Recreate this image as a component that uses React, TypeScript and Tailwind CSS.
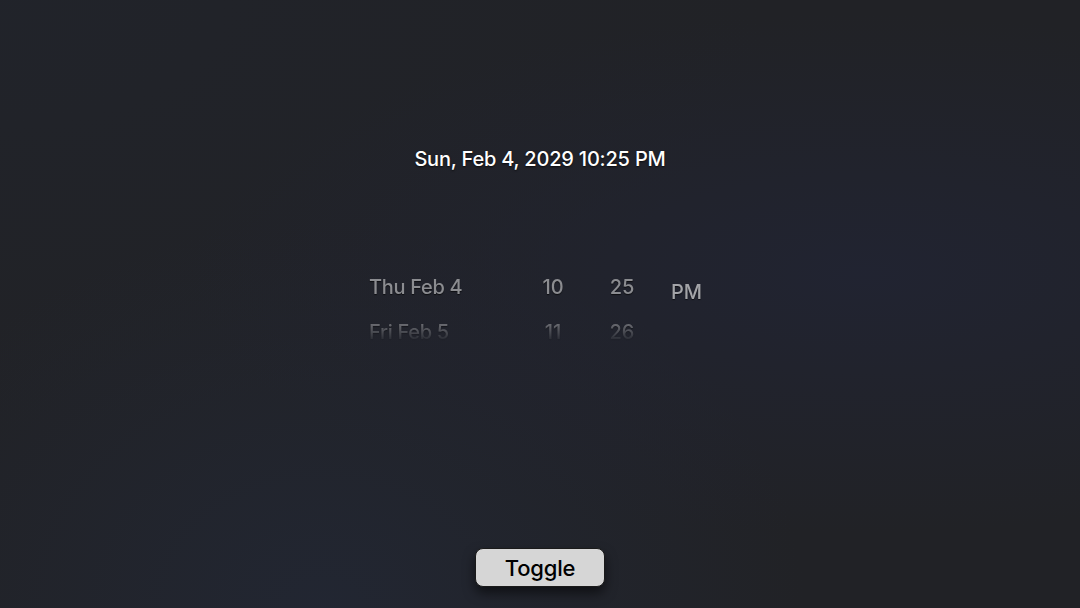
import React from "react";

export default function App() {
  return (
    <div
      className="relative w-[1080px] h-[608px] overflow-hidden flex flex-col items-center bg-[#212226]"
      style={{ fontFamily: "Inter, 'Noto Sans', sans-serif" }}
    >
      <div className="absolute inset-0 bg-[radial-gradient(ellipse_at_80%_45%,rgba(33,36,52,0.8)_0%,rgba(33,34,38,0)_55%),radial-gradient(ellipse_at_30%_100%,rgba(34,39,52,0.85)_0%,rgba(33,34,38,0)_45%),radial-gradient(ellipse_at_0%_0%,rgba(33,36,44,0.7)_0%,rgba(33,34,38,0)_50%)]" />
      <div className="relative flex flex-col items-center w-full h-full">
        <div className="mt-[146px] h-[26px] text-[20px] leading-[26px] font-medium tracking-[-0.2px] text-white [text-shadow:0_1px_2px_rgba(0,0,0,0.7)]">
          Sun, Feb 4, 2029 10:25 PM
        </div>

        <div className="mt-[98px] w-[342px] h-[72px] flex [mask-image:linear-gradient(to_bottom,black_0%,black_62%,rgba(0,0,0,0.6)_78%,transparent_100%)]">
          <div className="w-[150px] flex flex-col text-[20px] leading-[26px] font-medium tracking-[-0.3px] text-[#8b8c90] [text-shadow:0_1px_1px_rgba(0,0,0,0.6)]">
            <div className="pt-[4px] h-[45px] shrink-0">Thu Feb 4</div>
            <div className="pt-[4px] h-[45px] shrink-0">Fri Feb 5</div>
          </div>
          <div className="w-[68px] flex flex-col items-center text-[20px] leading-[26px] font-medium text-[#8b8c90] [text-shadow:0_1px_1px_rgba(0,0,0,0.6)]">
            <div className="pt-[4px] h-[45px] shrink-0">10</div>
            <div className="pt-[4px] h-[45px] shrink-0">11</div>
          </div>
          <div className="w-[70px] flex flex-col items-center text-[20px] leading-[26px] font-medium text-[#8b8c90] [text-shadow:0_1px_1px_rgba(0,0,0,0.6)]">
            <div className="pt-[4px] h-[45px] shrink-0">25</div>
            <div className="pt-[4px] h-[45px] shrink-0">26</div>
          </div>
          <div className="ml-[14px] pt-[9px] text-[20px] leading-[26px] font-medium text-[#a3a4a8] [text-shadow:0_1px_1px_rgba(0,0,0,0.6)]">
            PM
          </div>
        </div>

        <div className="mt-auto mb-[21px]">
          <button className="w-[130px] h-[39px] rounded-[8px] bg-[#d6d6d6] border border-[#1a1a1a] text-black text-[22px] leading-none font-medium tracking-[-0.2px] shadow-[0_6px_12px_rgba(0,0,0,0.55)] flex items-center justify-center">
            Toggle
          </button>
        </div>
      </div>
    </div>
  );
}
